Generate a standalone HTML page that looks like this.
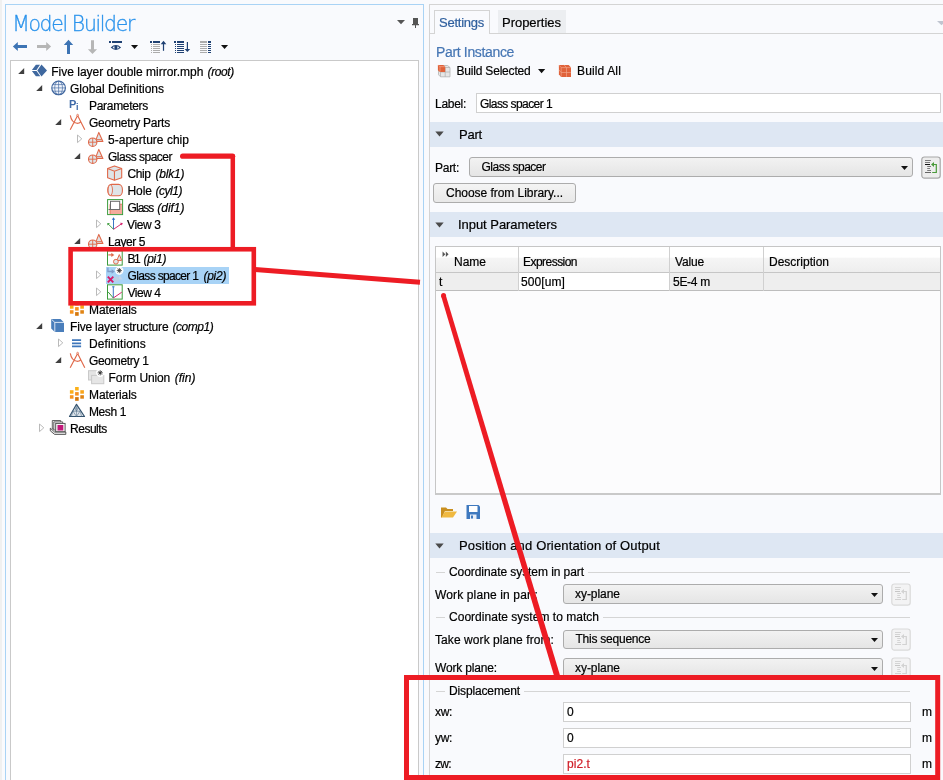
<!DOCTYPE html>
<html><head><meta charset="utf-8"><title>Model Builder</title>
<style>
html,body{margin:0;padding:0}
body{width:943px;height:780px;overflow:hidden;position:relative;background:#f9fafd;font-family:"Liberation Sans",sans-serif;font-size:12px;color:#000}
.ab{position:absolute;display:block}
svg{overflow:visible}
.t{-webkit-text-stroke:0.2px currentColor;margin-top:1px;position:absolute;white-space:nowrap;line-height:16px;height:16px;font-size:12px;transform-origin:0 50%}
.t i{font-style:italic}
.lp{left:5px;top:4px;width:419px;height:790px;background:#f9fafd;border:1px solid #a9d3f5;box-sizing:border-box}
.tree{left:10px;top:60px;width:409px;height:730px;background:#fff;border:1px solid #c9c9c9;box-sizing:border-box}
.rp{left:429px;top:4px;width:530px;height:790px;background:#f9fafd;border:1px solid #d4d4d4;box-sizing:border-box}
.sec{left:430px;width:513px;height:24px;background:#dee7f3}
.dd{box-sizing:border-box;border:1px solid #acacac;border-radius:3px;background:linear-gradient(#f2f2f2,#e5e5e5)}
.inp{box-sizing:border-box;border:1px solid #d0d0d0;background:#fff}
.gl{height:1px;background:#d5d5d5}
#w{position:absolute;left:0;top:0;width:943px;height:780px;will-change:transform}
</style></head><body>
<div id="w">
<!-- left panel -->
<div class="ab" style="left:0;top:0;width:1.500px;height:780px;background:#f0f0f0"></div>
<div class="ab lp"></div>
<span class="t tr" style="letter-spacing:-1.338px;left:12.200px;top:10px;-webkit-text-stroke:0.300px #2a93ec;font-family:'DejaVu Sans','Liberation Sans',sans-serif;font-weight:200;font-size:20.400px;line-height:26px;height:26px;color:#2a93ec">Model Builder</span>
<!-- toolbar icons -->
<svg class="ab" style="left:0;top:0" width="430" height="60" viewBox="0 0 430 60">
<path d="M12.900 46.450L17.800 42V45H27V48H17.800V51Z" fill="#3d74b4"/>
<path d="M51.100 46.450L46.200 42V45H37V48H46.200V51Z" fill="#b6b6b6"/>
<path d="M68.500 39.800L73.200 45H70V54H67V45H63.800Z" fill="#3d74b4"/>
<path d="M92.500 54.100L97.100 49.300H94V40.200H91V49.300H87.900Z" fill="#b6b6b6"/>
<rect x="109" y="41" width="2" height="2" fill="#1f4173"/><rect x="112" y="41" width="10" height="2" fill="#1f4173"/>
<path d="M110.700 47.500Q115.900 42.600 121.100 47.500Q115.900 52.400 110.700 47.500Z" fill="#1f4173"/><path d="M112.600 47.500Q113.600 46.300 114.500 46.300V48.700Q113.600 48.700 112.600 47.500Z M119.200 47.500Q118.200 46.300 117.300 46.300V48.700Q118.200 48.700 119.200 47.500Z" fill="#e9eef6"/>
<path d="M131 45.100H138.100L134.550 49Z" fill="#111"/>
<rect x="150" y="41" width="2" height="2" fill="#1f4173"/><rect x="153" y="41" width="7" height="2" fill="#1f4173"/>
<rect x="151" y="44" width="1" height="1" fill="#acacac"/><rect x="151" y="46" width="1" height="1" fill="#acacac"/><rect x="151" y="48" width="1" height="1" fill="#acacac"/><rect x="151" y="50" width="1" height="1" fill="#acacac"/><rect x="151" y="52" width="1" height="1" fill="#acacac"/><rect x="153" y="44" width="7" height="1" fill="#acacac"/><rect x="153" y="46" width="7" height="1" fill="#acacac"/><rect x="153" y="48" width="7" height="1" fill="#acacac"/><rect x="153" y="50" width="7" height="1" fill="#acacac"/><rect x="153" y="52" width="7" height="1" fill="#acacac"/>
<rect x="162.900" y="42" width="1.200" height="8.800" fill="#1f4173"/><path d="M163.500 40.700L166.300 44.200H160.700Z" fill="#1f4173"/>
<rect x="174" y="41" width="2" height="2" fill="#1f4173"/><rect x="177" y="41" width="7" height="2" fill="#1f4173"/>
<rect x="175" y="44" width="1" height="1" fill="#1f4173"/><rect x="175" y="46" width="1" height="1" fill="#1f4173"/><rect x="175" y="48" width="1" height="1" fill="#1f4173"/><rect x="175" y="50" width="1" height="1" fill="#1f4173"/><rect x="175" y="52" width="1" height="1" fill="#1f4173"/><rect x="177" y="44" width="7" height="1" fill="#1f4173"/><rect x="177" y="46" width="7" height="1" fill="#1f4173"/><rect x="177" y="48" width="7" height="1" fill="#1f4173"/><rect x="177" y="50" width="7" height="1" fill="#1f4173"/><rect x="177" y="52" width="7" height="1" fill="#1f4173"/>
<rect x="186.800" y="42" width="1.200" height="8" fill="#1f4173"/><path d="M187.400 52.100L190.200 48.900H184.600Z" fill="#1f4173"/>
<rect x="200" y="41" width="7" height="2" fill="#acacac"/><rect x="208" y="41" width="3" height="2" fill="#1f4173"/>
<rect x="200" y="44" width="7" height="1" fill="#acacac"/><rect x="200" y="46" width="7" height="1" fill="#acacac"/><rect x="200" y="48" width="7" height="1" fill="#acacac"/><rect x="200" y="50" width="7" height="1" fill="#acacac"/><rect x="200" y="52" width="7" height="1" fill="#acacac"/><rect x="208" y="44" width="3" height="1" fill="#1f4173"/><rect x="208" y="46" width="3" height="1" fill="#1f4173"/><rect x="208" y="48" width="3" height="1" fill="#1f4173"/><rect x="208" y="50" width="3" height="1" fill="#1f4173"/><rect x="208" y="52" width="3" height="1" fill="#1f4173"/>
<path d="M221 45.100H228.100L224.550 49Z" fill="#111"/>
</svg>
<!-- panel menu + pin -->
<svg class="ab" style="left:396px;top:16px" width="26" height="14" viewBox="0 0 26 14">
<path d="M1 4.100H9L5 8.200Z" fill="#555"/>
<path d="M17 2H22V8H17Z M16 8H23V9.300H16Z M19 9.300H20V12H19Z" fill="#555"/>
</svg>
<div class="ab tree"></div>
<div class="ab" style="left:106px;top:267px;width:123px;height:17px;background:#a8d3f6"></div>
<svg class="ab" style="left:0;top:0" width="430" height="450" viewBox="0 0 430 450"><path d="M24.2 68V74H18.2Z" fill="#404040"/><path d="M42.2 85V91H36.2Z" fill="#404040"/><path d="M61.2 119V125H55.2Z" fill="#404040"/><path d="M77.5 135L81.8 138.8L77.5 142.6Z" fill="#fff" stroke="#b2b2b2" stroke-width="0.900" stroke-linejoin="round"/><path d="M80.2 153V159H74.2Z" fill="#404040"/><path d="M96.5 220L100.8 223.8L96.5 227.6Z" fill="#fff" stroke="#b2b2b2" stroke-width="0.900" stroke-linejoin="round"/><path d="M80.2 238V244H74.2Z" fill="#404040"/><path d="M96.5 271L100.8 274.8L96.5 278.6Z" fill="#fff" stroke="#b2b2b2" stroke-width="0.900" stroke-linejoin="round"/><path d="M96.5 288L100.8 291.8L96.5 295.6Z" fill="#fff" stroke="#b2b2b2" stroke-width="0.900" stroke-linejoin="round"/><path d="M42.2 323V329H36.2Z" fill="#404040"/><path d="M58.5 339L62.8 342.8L58.5 346.6Z" fill="#fff" stroke="#b2b2b2" stroke-width="0.900" stroke-linejoin="round"/><path d="M61.2 357V363H55.2Z" fill="#404040"/><path d="M39.5 424L43.8 427.8L39.5 431.6Z" fill="#fff" stroke="#b2b2b2" stroke-width="0.900" stroke-linejoin="round"/></svg>
<svg class="ab" style="left:31px;top:63px" width="16" height="16" viewBox="0 0 16 16"><path d="M0.900 7L4.900 1.800H9L5.500 7Z M0.900 8H5.500L9.300 13.200H4.900Z M6.300 7.500L10.500 1.600L16 7.500L10.500 13.600Z" fill="#3f689f"/></svg>
<span class="t tr" style="letter-spacing:0.005px;left:51.2px;top:63px">Five layer double mirror.mph</span>
<span class="t tr" style="letter-spacing:-0.395px;left:207.6px;top:63px"><i>(root)</i></span>
<svg class="ab" style="left:51px;top:80px" width="16" height="16" viewBox="0 0 16 16"><circle cx="7.600" cy="7.900" r="6.800" fill="#f1f5fb" stroke="#41679f" stroke-width="1.200"/><ellipse cx="7.600" cy="7.900" rx="3.900" ry="6.800" fill="none" stroke="#4a70a6" stroke-width="0.700"/><path d="M1 7.900H14.200M2 4.600H13.200M2 11.200H13.200M7.600 1.200V14.600" stroke="#4a70a6" stroke-width="0.700" fill="none"/></svg>
<span class="t tr" style="letter-spacing:-0.003px;left:70px;top:80px">Global Definitions</span>
<svg class="ab" style="left:69px;top:97px" width="16" height="16" viewBox="0 0 16 16"><text x="0" y="11" font-family='"Liberation Sans",sans-serif' font-weight="bold" font-size="11" fill="#3f6aa8">P</text><text x="7" y="12.800" font-family='"Liberation Sans",sans-serif' font-weight="bold" font-size="9" fill="#3f6aa8">i</text></svg>
<span class="t tr" style="letter-spacing:-0.303px;left:89px;top:97px">Parameters</span>
<svg class="ab" style="left:69px;top:114px" width="16" height="16" viewBox="0 0 16 16"><path d="M8.600 1.400 L1.200 15.700 M8.600 1.400 L15.800 15.700 M1.300 1.300 Q2.500 8.500 8 9.300 Q10.500 9.300 11.800 7.900" stroke="#e0694a" stroke-width="1.150" fill="none"/><circle cx="8.600" cy="1.200" r="0.900" fill="#fff" stroke="#e0694a" stroke-width="0.800"/></svg>
<span class="t tr" style="letter-spacing:-0.217px;left:89px;top:114px">Geometry Parts</span>
<svg class="ab" style="left:88px;top:131px" width="16" height="16" viewBox="0 0 16 16"><path d="M10.800 1.400 L7.300 10.400 H14.900Z" fill="#dfe5e8" stroke="#e0694a" stroke-width="1.100" stroke-linejoin="round"/><path d="M8.200 8.500H14" stroke="#e0694a" stroke-width="0.800"/><circle cx="4.700" cy="11.200" r="4.200" fill="#dfe5e8" stroke="#e0694a" stroke-width="1.100"/><path d="M0.500 11.200H8.900M4.700 7V15.400" stroke="#e0694a" stroke-width="0.900"/></svg>
<span class="t tr" style="letter-spacing:0.019px;left:108px;top:131px">5-aperture chip</span>
<svg class="ab" style="left:88px;top:148px" width="16" height="16" viewBox="0 0 16 16"><path d="M10.800 1.400 L7.300 10.400 H14.900Z" fill="#dfe5e8" stroke="#e0694a" stroke-width="1.100" stroke-linejoin="round"/><path d="M8.200 8.500H14" stroke="#e0694a" stroke-width="0.800"/><circle cx="4.700" cy="11.200" r="4.200" fill="#dfe5e8" stroke="#e0694a" stroke-width="1.100"/><path d="M0.500 11.200H8.900M4.700 7V15.400" stroke="#e0694a" stroke-width="0.900"/></svg>
<span class="t tr" style="letter-spacing:-0.503px;left:108px;top:148px">Glass spacer</span>
<svg class="ab" style="left:107px;top:165px" width="16" height="16" viewBox="0 0 16 16"><path d="M0.600 3.500 L7.450 0.900 L14.700 3.500 V12.700 L7.450 15.300 L0.600 12.700Z" fill="#dfe4e7" stroke="#e0694a" stroke-width="1.100" stroke-linejoin="round"/><path d="M0.600 3.500 L7.450 6.200 L14.700 3.500 M7.450 6.200V15.300" stroke="#e0694a" stroke-width="1.100" fill="none"/></svg>
<span class="t tr" style="letter-spacing:-0.422px;left:127.6px;top:165px">Chip</span>
<span class="t tr" style="letter-spacing:-0.186px;left:155.4px;top:165px"><i>(blk1)</i></span>
<svg class="ab" style="left:107px;top:182px" width="16" height="16" viewBox="0 0 16 16"><rect x="0.800" y="2.400" width="14.600" height="11.400" rx="3.800" ry="4.800" fill="#dfe4e7" stroke="#e0694a" stroke-width="1.100"/><ellipse cx="3.300" cy="8.100" rx="2.200" ry="5.400" fill="#e7ebed" stroke="#e0694a" stroke-width="0.900"/></svg>
<span class="t tr" style="letter-spacing:-0.147px;left:127.6px;top:182px">Hole</span>
<span class="t tr" style="letter-spacing:-0.424px;left:155.4px;top:182px"><i>(cyl1)</i></span>
<svg class="ab" style="left:107px;top:199px" width="16" height="16" viewBox="0 0 16 16"><rect x="0.600" y="0.600" width="15" height="15" fill="#fff" stroke="#3c9b3c" stroke-width="1"/><rect x="3" y="5.200" width="12" height="9.800" fill="#f4ab9d"/><path d="M3 15V5.200H15" stroke="#e0694a" stroke-width="0.800" fill="none"/><rect x="3.500" y="2.300" width="9.200" height="8.200" fill="#fff" stroke="#6b6b6b" stroke-width="1"/><path d="M1.500 10.500H12.700" stroke="#6b6b6b" stroke-width="1"/></svg>
<span class="t tr" style="letter-spacing:-0.977px;left:127.6px;top:199px">Glass</span>
<span class="t tr" style="letter-spacing:-0.024px;left:157.3px;top:199px"><i>(dif1)</i></span>
<svg class="ab" style="left:107px;top:216px" width="16" height="16" viewBox="0 0 16 16"><path d="M6.500 2V13.300" stroke="#2f6fc0" stroke-width="0.950"/><path d="M4.800 3.800L6.500 1.200L8.200 3.800Z" fill="#2f6fc0"/><path d="M6.500 13.300L1 7.800" stroke="#3a9a3a" stroke-width="0.950"/><path d="M0.400 9.600L0.400 7.100L3 7.300Z" fill="#3a9a3a"/><path d="M6.500 13.300L15 7.500" stroke="#d6246e" stroke-width="0.950"/><path d="M13 6.800L15.800 6.900L14.800 9.400Z" fill="#d6246e"/></svg>
<span class="t tr" style="letter-spacing:-0.385px;left:127px;top:216px">View 3</span>
<svg class="ab" style="left:88px;top:233px" width="16" height="16" viewBox="0 0 16 16"><path d="M10.800 1.400 L7.300 10.400 H14.900Z" fill="#dfe5e8" stroke="#e0694a" stroke-width="1.100" stroke-linejoin="round"/><path d="M8.200 8.500H14" stroke="#e0694a" stroke-width="0.800"/><circle cx="4.700" cy="11.200" r="4.200" fill="#dfe5e8" stroke="#e0694a" stroke-width="1.100"/><path d="M0.500 11.200H8.900M4.700 7V15.400" stroke="#e0694a" stroke-width="0.900"/></svg>
<span class="t tr" style="letter-spacing:-0.433px;left:108px;top:233px">Layer 5</span>
<svg class="ab" style="left:107px;top:250px" width="16" height="16" viewBox="0 0 16 16"><rect x="0.500" y="0.800" width="14.700" height="14.300" fill="#fff" stroke="#3c9b3c" stroke-width="1"/><path d="M1.300 4.900H5" stroke="#e0694a" stroke-width="1.200"/><path d="M4.300 2.700L7.300 4.900L4.300 7.100Z" fill="#e0694a"/><path d="M12.300 4.600L9.900 10.400H14.700Z" fill="#dfe5e8" stroke="#e0694a" stroke-width="1" stroke-linejoin="round"/><circle cx="8.900" cy="11.700" r="2.400" fill="#dfe5e8" stroke="#e0694a" stroke-width="1"/></svg>
<span class="t tr" style="letter-spacing:-1.644px;left:127.6px;top:250px">B1</span>
<span class="t tr" style="letter-spacing:-0.223px;left:143.4px;top:250px"><i>(pi1)</i></span>
<svg class="ab" style="left:107px;top:267px" width="16" height="16" viewBox="0 0 16 16"><path d="M0.900 0.600V4.500H5.500" stroke="#7f9cc8" stroke-width="1.300" fill="none"/><path d="M4.600 2.300L7.800 4.500L4.600 6.700Z" fill="#7f9cc8"/><path d="M12.800 8.300L10.500 12.500H15.500Z" fill="#c3d6ea"/><circle cx="9.600" cy="12" r="2.600" fill="#bccfe4"/><path d="M0.800 9.700L6.300 15.300M6.300 9.700L0.800 15.300" stroke="#d6196b" stroke-width="1.900"/><circle cx="12.300" cy="3.600" r="4.200" fill="#fff"/><path d="M12.300 1V6.200M9.700 3.600H14.900M10.450 1.750L14.150 5.450M10.450 5.450L14.150 1.750" stroke="#3a3a3a" stroke-width="0.850"/><circle cx="12.300" cy="3.600" r="1" fill="#3a3a3a"/></svg>
<span class="t tr" style="letter-spacing:-0.66px;left:127.6px;top:267px">Glass spacer 1</span>
<span class="t tr" style="letter-spacing:-0.223px;left:203.4px;top:267px"><i>(pi2)</i></span>
<svg class="ab" style="left:107px;top:284px" width="16" height="16" viewBox="0 0 16 16"><rect x="0.500" y="0.800" width="14.700" height="14.300" fill="#fff" stroke="#3c9b3c" stroke-width="1"/><path d="M6.300 2.800V14" stroke="#2f6fc0" stroke-width="0.950"/><path d="M5.200 2.800H7.500" stroke="#2f6fc0" stroke-width="1"/><path d="M6.300 14L1.200 8" stroke="#3a9a3a" stroke-width="1"/><path d="M6.300 14L14.800 8.200" stroke="#d6246e" stroke-width="1"/></svg>
<span class="t tr" style="letter-spacing:-0.519px;left:127.6px;top:284px">View 4</span>
<svg class="ab" style="left:69px;top:301px" width="16" height="16" viewBox="0 0 16 16"><rect x="0.900" y="4.200" width="3.600" height="3.500" fill="#fbad18"/><rect x="0.900" y="9.200" width="3.600" height="3.500" fill="#f7931e"/><rect x="6.100" y="1" width="3.600" height="3.500" fill="#fbb017"/><rect x="6.100" y="6.100" width="3.600" height="3.500" fill="#f7901e"/><rect x="6.100" y="11.100" width="3.600" height="3.700" fill="#d4780f"/><rect x="11.300" y="4.200" width="3.600" height="3.500" fill="#f9a51a"/><rect x="11.300" y="9.200" width="3.600" height="3.500" fill="#e08414"/></svg>
<span class="t tr" style="letter-spacing:-0.121px;left:89px;top:301px">Materials</span>
<svg class="ab" style="left:51px;top:318px" width="16" height="16" viewBox="0 0 16 16"><path d="M0.200 1 H9.500 L13 4.400 V13.900 H3.800 L0.200 10.500Z" fill="#4a7ebb"/><path d="M0.600 1.400 L3.800 4.400 H13 M3.800 4.400 V13.900" stroke="#eaf1f9" stroke-width="0.900" fill="none"/></svg>
<span class="t tr" style="letter-spacing:-0.182px;left:70px;top:318px">Five layer structure</span>
<span class="t tr" style="letter-spacing:-0.445px;left:172.4px;top:318px"><i>(comp1)</i></span>
<svg class="ab" style="left:69px;top:335px" width="16" height="16" viewBox="0 0 16 16"><path d="M3 5.050H12.100M3 8.350H12.100M3 11.450H12.100" stroke="#3f77bb" stroke-width="1.700"/></svg>
<span class="t tr" style="letter-spacing:0.07px;left:89px;top:335px">Definitions</span>
<svg class="ab" style="left:69px;top:352px" width="16" height="16" viewBox="0 0 16 16"><path d="M8.600 1.400 L1.200 15.700 M8.600 1.400 L15.800 15.700 M1.300 1.300 Q2.500 8.500 8 9.300 Q10.500 9.300 11.800 7.900" stroke="#e0694a" stroke-width="1.150" fill="none"/><circle cx="8.600" cy="1.200" r="0.900" fill="#fff" stroke="#e0694a" stroke-width="0.800"/></svg>
<span class="t tr" style="letter-spacing:-0.32px;left:89px;top:352px">Geometry 1</span>
<svg class="ab" style="left:88px;top:369px" width="16" height="16" viewBox="0 0 16 16"><rect x="0.500" y="1.700" width="12.200" height="9.300" fill="#e4e4e4" stroke="#c9c9c9" stroke-width="1"/><rect x="3.600" y="6.400" width="12.200" height="8.300" fill="#e6e6e6" stroke="#c9c9c9" stroke-width="1"/><circle cx="12.200" cy="3.800" r="4.200" fill="#fff"/><path d="M12.200 1.200V6.400M9.600 3.800H14.800M10.350 1.950L14.050 5.650M10.350 5.650L14.050 1.950" stroke="#3a3a3a" stroke-width="0.850"/><circle cx="12.200" cy="3.800" r="1" fill="#3a3a3a"/></svg>
<span class="t tr" style="letter-spacing:-0.109px;left:108.6px;top:369px">Form Union</span>
<span class="t tr" style="letter-spacing:0.006px;left:174.7px;top:369px"><i>(fin)</i></span>
<svg class="ab" style="left:69px;top:386px" width="16" height="16" viewBox="0 0 16 16"><rect x="0.900" y="4.200" width="3.600" height="3.500" fill="#fbad18"/><rect x="0.900" y="9.200" width="3.600" height="3.500" fill="#f7931e"/><rect x="6.100" y="1" width="3.600" height="3.500" fill="#fbb017"/><rect x="6.100" y="6.100" width="3.600" height="3.500" fill="#f7901e"/><rect x="6.100" y="11.100" width="3.600" height="3.700" fill="#d4780f"/><rect x="11.300" y="4.200" width="3.600" height="3.500" fill="#f9a51a"/><rect x="11.300" y="9.200" width="3.600" height="3.500" fill="#e08414"/></svg>
<span class="t tr" style="letter-spacing:-0.121px;left:89px;top:386px">Materials</span>
<svg class="ab" style="left:69px;top:403px" width="16" height="16" viewBox="0 0 16 16"><path d="M7.500 1.300L15.500 13.500H0.500Z" fill="#dde4ea" stroke="#34536e" stroke-width="1.200" stroke-linejoin="round"/><path d="M4 8.200H11L7.500 13.500Z M5.700 5 H9.300 L7.500 8.200Z M4 8.200 L2.300 13.500 M11 8.200 L12.700 13.500" stroke="#4d6a85" stroke-width="0.550" fill="none"/><path d="M7.500 2.500V13" stroke="#4d6a85" stroke-width="0.500"/></svg>
<span class="t tr" style="letter-spacing:-0.41px;left:89px;top:403px">Mesh 1</span>
<svg class="ab" style="left:50px;top:420px" width="16" height="16" viewBox="0 0 16 16"><path d="M2.300 0.500H10.700V9H2.300Z" fill="#f4f4f4" stroke="#555" stroke-width="0.900"/><path d="M3.800 1.900H12.700V10H3.800Z" fill="#f4f4f4" stroke="#555" stroke-width="0.900"/><path d="M0.300 8.200 L4.600 12 H15.800 V14.400 H4.600 L0.300 10.800Z" fill="#e9e9e9" stroke="#4a4a4a" stroke-width="0.900" stroke-linejoin="round"/><rect x="5.700" y="3.400" width="9.400" height="8.300" fill="#f6f6f6" stroke="#4a4a4a" stroke-width="0.900"/><rect x="7.500" y="5" width="5.800" height="5.500" fill="#c2187a"/></svg>
<span class="t tr" style="letter-spacing:-0.474px;left:70px;top:420px">Results</span>

<!-- right panel -->
<div class="ab rp"></div>
<div class="ab" style="left:430px;top:33px;width:513px;height:1px;background:#d4d4d4"></div>
<div class="ab" style="left:434px;top:10px;width:56px;height:24px;box-sizing:border-box;border:1px solid #d4d4d4;border-bottom:none;background:#f9fafd"></div>
<div class="ab" style="left:498px;top:10px;width:68px;height:23px;background:#eceef1"></div>
<span class="t tr" style="letter-spacing:-0.248px;left:439px;top:14px;font-size:13px;color:#2f5f9e">Settings</span>
<span class="t tr" style="letter-spacing:-0.025px;left:502px;top:14px;font-size:13px">Properties</span>
<svg class="ab" style="left:930px;top:16px" width="13" height="12" viewBox="0 0 13 12"><path d="M7 5H16L11.500 9.300Z" fill="#c0c5d0"/></svg>
<span class="t tr" style="letter-spacing:-0.346px;left:436px;top:42px;font-size:14px;line-height:18px;height:18px;color:#4676b4">Part Instance</span>
<!-- build buttons -->
<svg class="ab" style="left:0;top:0" width="943" height="90" viewBox="0 0 943 90">
<path d="M438.500 65.500H447.500L450 67.500V76.800H440.500L438.500 74.800Z" fill="#e6e6e6" stroke="#b3b3b3" stroke-width="0.800" stroke-linejoin="round"/>
<path d="M440.500 67.500H450M440.500 72H450M445.200 67.500V76.800M440.500 67.500V76.800M438.500 65.500L440.500 67.500" stroke="#b3b3b3" stroke-width="0.800" fill="none"/>
<path d="M437.900 64.900H443.200L445.200 66.600V71.900H439.900L437.900 70.200Z" fill="#e0623a"/>
<path d="M438.300 65.200L440 66.700H445M440 66.700V71.700" stroke="#f3a78c" stroke-width="0.700" fill="none"/>
<path d="M558.900 64.900H568.700L571 67.600V77H561.200L558.900 74.400Z" fill="#e0623a"/>
<path d="M559.300 65.300L561.200 67.600H570.800M561.200 67.600V76.800M566.500 67.600V76.800M561.200 72.500H570.800M564 64.900L566.500 67.600M559 70L561.200 72.500" stroke="#f1a388" stroke-width="0.700" fill="none"/>
</svg>
<span class="t tr" style="letter-spacing:-0.194px;left:456.500px;top:62px">Build Selected</span>
<svg class="ab" style="left:537px;top:68px" width="9" height="6" viewBox="0 0 9 6"><path d="M1 1.100H8.200L4.600 5.200Z" fill="#111"/></svg>
<span class="t tr" style="letter-spacing:0.144px;left:577px;top:62px">Build All</span>
<!-- label -->
<span class="t tr" style="letter-spacing:-0.284px;left:435px;top:95px">Label:</span>
<div class="ab inp" style="left:476px;top:93px;width:465px;height:20px"></div>
<span class="t tr" style="letter-spacing:-0.575px;left:480px;top:95px">Glass spacer 1</span>
<!-- Part section -->
<div class="ab sec" style="top:122.100px;height:24.700px"></div>
<svg class="ab" style="left:435px;top:131.400px" width="10" height="7" viewBox="0 0 10 7"><path d="M0.300 0.500H8.700L4.500 5.600Z" fill="#4a4a4a"/></svg>
<span class="t tr" style="letter-spacing:-0.211px;left:459px;top:126px;font-size:13px">Part</span>
<span class="t tr" style="letter-spacing:-0.269px;left:435px;top:159px">Part:</span>
<div class="ab dd" style="left:469px;top:157px;width:444px;height:20px"></div>
<span class="t tr" style="letter-spacing:-0.503px;left:481.500px;top:158px">Glass spacer</span>
<svg class="ab" style="left:900px;top:165px" width="9" height="6" viewBox="0 0 9 6"><path d="M1 1H8L4.500 5Z" fill="#111"/></svg>
<svg class="ab" style="left:921px;top:156px" width="20" height="23" viewBox="0 0 20 23"><rect x="0.800" y="1" width="18.400" height="21.200" rx="2.600" fill="#ededed" stroke="#a8a8a8" stroke-width="1.200"/><path d="M4 4.500H9.900M4 6.500H9M6.200 10.500H10M6.200 12.500H9M6.200 14.500H10" stroke="#7a7a7a" stroke-width="1"/><path d="M4 8.500H9" stroke="#111" stroke-width="1"/><path d="M4 16.500H10" stroke="#666" stroke-width="1"/><path d="M11.200 16.500H15.300V8.500H12.800" stroke="#4a9a3a" stroke-width="1.200" fill="none"/><path d="M10 8.500L13 6V11Z" fill="#4a9a3a"/></svg>
<div class="ab dd" style="left:433px;top:183px;width:143px;height:20px;background:linear-gradient(#f4f4f4,#e8e8e8)"></div>
<span class="t tr" style="letter-spacing:-0.038px;left:446px;top:184px">Choose from Library...</span>
<!-- Input Parameters -->
<div class="ab sec" style="top:212.400px;height:24.400px"></div>
<svg class="ab" style="left:435px;top:221.700px" width="10" height="7" viewBox="0 0 10 7"><path d="M0.300 0.500H8.700L4.500 5.600Z" fill="#4a4a4a"/></svg>
<span class="t tr" style="letter-spacing:-0.045px;left:458px;top:216px;font-size:13px">Input Parameters</span>
<!-- table -->
<div class="ab" style="left:435px;top:246px;width:506px;height:249px;box-sizing:border-box;border:1px solid #c6c6c6;border-bottom:2px solid #c9c9c9;background:#fcfcfd"></div>
<div class="ab" style="left:436px;top:247px;width:504px;height:25px;background:linear-gradient(#ffffff 0%,#ffffff 40%,#f5f5f5 46%,#eeeeee 100%)"></div>
<div class="ab" style="left:436px;top:272px;width:504px;height:19px;background:#eeeeee;border-top:1px solid #c6c6c6;border-bottom:1px solid #bdbdbd;box-sizing:border-box"></div>
<div class="ab" style="left:519px;top:273px;width:150px;height:17px;background:#fff"></div>
<div class="ab" style="left:518px;top:247px;width:1px;height:44px;background:#d0d0d0"></div>
<div class="ab" style="left:669px;top:247px;width:1px;height:44px;background:#d0d0d0"></div>
<div class="ab" style="left:763.400px;top:247px;width:1px;height:44px;background:#d0d0d0"></div>
<svg class="ab" style="left:441.800px;top:251px" width="7.700" height="6.600" viewBox="0 0 7 6"><path d="M0.500 0.500L3 3L0.500 5.500Z M3.500 0.500L6 3L3.500 5.500Z" fill="#555"/></svg>
<span class="t tr" style="letter-spacing:-0.004px;left:454px;top:253px">Name</span>
<span class="t tr" style="letter-spacing:-0.537px;left:523px;top:253px">Expression</span>
<span class="t tr" style="letter-spacing:-0.163px;left:675px;top:253px">Value</span>
<span class="t tr" style="letter-spacing:-0.003px;left:769px;top:253px">Description</span>
<span class="t" style="left:439px;top:273px">t</span>
<span class="t tr" style="letter-spacing:0.092px;left:521px;top:273px">500[um]</span>
<span class="t tr" style="letter-spacing:-0.281px;left:673px;top:273px">5E-4 m</span>
<!-- open / save icons -->
<svg class="ab" style="left:440px;top:504px" width="42" height="16" viewBox="0 0 42 16"><path d="M1 3.500H6L7.500 5H13V7H5L2 13.500H1Z" fill="#c98f1f"/><path d="M5 7.500H17L13 13.500H1.500Z" fill="#f0b941"/>
<path d="M26.500 1H38.500L40 2.500V15H26.500Z" fill="#3f79bf"/><rect x="29" y="2" width="8.500" height="6" fill="#fff"/><rect x="30" y="10.500" width="6.500" height="4.500" fill="#e8eef7"/><rect x="31" y="11.500" width="2" height="3" fill="#3f79bf"/></svg>
<!-- Position and orientation -->
<div class="ab sec" style="top:533.300px;height:24.400px"></div>
<svg class="ab" style="left:435px;top:542.700px" width="10" height="7" viewBox="0 0 10 7"><path d="M0.300 0.500H8.700L4.500 5.600Z" fill="#4a4a4a"/></svg>
<span class="t tr" style="letter-spacing:0.151px;left:459px;top:537px;font-size:13px">Position and Orientation of Output</span>

<div class="ab gl" style="left:436px;top:572px;width:9px"></div>
<span class="t tr" style="letter-spacing:-0.069px;left:449px;top:563px">Coordinate system in part</span>
<div class="ab gl" style="left:588px;top:572px;width:322px"></div>
<span class="t tr" style="letter-spacing:0.132px;left:435px;top:586px">Work plane in part:</span>
<div class="ab dd" style="left:563px;top:584px;width:320px;height:20px"></div>
<span class="t tr" style="letter-spacing:-0.045px;left:575px;top:585px">xy-plane</span>
<svg class="ab" style="left:870px;top:592px" width="9" height="6" viewBox="0 0 9 6"><path d="M1 1H8L4.500 5Z" fill="#111"/></svg>

<div class="ab gl" style="left:436px;top:617px;width:9px"></div>
<span class="t tr" style="letter-spacing:0.023px;left:449px;top:608px">Coordinate system to match</span>
<div class="ab gl" style="left:603px;top:617px;width:307px"></div>
<span class="t tr" style="letter-spacing:0.077px;left:435px;top:631px">Take work plane from:</span>
<div class="ab dd" style="left:563px;top:630px;width:320px;height:19px"></div>
<span class="t tr" style="letter-spacing:-0.234px;left:575.500px;top:630px">This sequence</span>
<svg class="ab" style="left:870px;top:637px" width="9" height="6" viewBox="0 0 9 6"><path d="M1 1H8L4.500 5Z" fill="#111"/></svg>

<span class="t tr" style="letter-spacing:-0.165px;left:435px;top:659px">Work plane:</span>
<div class="ab dd" style="left:563px;top:658px;width:320px;height:20px"></div>
<span class="t tr" style="letter-spacing:-0.045px;left:575px;top:659px">xy-plane</span>
<svg class="ab" style="left:870px;top:666px" width="9" height="6" viewBox="0 0 9 6"><path d="M1 1H8L4.500 5Z" fill="#111"/></svg>

<!-- disabled side buttons -->
<svg class="ab" style="left:891px;top:583px" width="20" height="23" viewBox="0 0 20 23"><rect x="0.800" y="1" width="18.400" height="21.200" rx="2.600" fill="#f3f3f4" stroke="#dadada" stroke-width="1.200"/><path d="M4 4.500H9.900M4 6.500H9M6.200 10.500H10M6.200 12.500H9M6.200 14.500H10" stroke="#d4d4d4" stroke-width="1"/><path d="M4 8.500H9" stroke="#c6c6c6" stroke-width="1"/><path d="M4 16.500H10" stroke="#d2d2d2" stroke-width="1"/><path d="M11.200 16.500H15.300V8.500H12.800" stroke="#d2d2d2" stroke-width="1.200" fill="none"/><path d="M10 8.500L13 6V11Z" fill="#d2d2d2"/></svg>
<svg class="ab" style="left:891px;top:628px" width="20" height="23" viewBox="0 0 20 23"><rect x="0.800" y="1" width="18.400" height="21.200" rx="2.600" fill="#f3f3f4" stroke="#dadada" stroke-width="1.200"/><path d="M4 4.500H9.900M4 6.500H9M6.200 10.500H10M6.200 12.500H9M6.200 14.500H10" stroke="#d4d4d4" stroke-width="1"/><path d="M4 8.500H9" stroke="#c6c6c6" stroke-width="1"/><path d="M4 16.500H10" stroke="#d2d2d2" stroke-width="1"/><path d="M11.200 16.500H15.300V8.500H12.800" stroke="#d2d2d2" stroke-width="1.200" fill="none"/><path d="M10 8.500L13 6V11Z" fill="#d2d2d2"/></svg>
<svg class="ab" style="left:891px;top:657px" width="20" height="23" viewBox="0 0 20 23"><rect x="0.800" y="1" width="18.400" height="21.200" rx="2.600" fill="#f3f3f4" stroke="#dadada" stroke-width="1.200"/><path d="M4 4.500H9.900M4 6.500H9M6.200 10.500H10M6.200 12.500H9M6.200 14.500H10" stroke="#d4d4d4" stroke-width="1"/><path d="M4 8.500H9" stroke="#c6c6c6" stroke-width="1"/><path d="M4 16.500H10" stroke="#d2d2d2" stroke-width="1"/><path d="M11.200 16.500H15.300V8.500H12.800" stroke="#d2d2d2" stroke-width="1.200" fill="none"/><path d="M10 8.500L13 6V11Z" fill="#d2d2d2"/></svg>

<!-- Displacement -->
<div class="ab gl" style="left:436px;top:691px;width:9px"></div>
<span class="t tr" style="letter-spacing:-0.142px;left:449px;top:682px">Displacement</span>
<div class="ab gl" style="left:524px;top:691px;width:386px"></div>
<span class="t tr" style="letter-spacing:-0.333px;left:435px;top:703px">xw:</span>
<div class="ab inp" style="left:563px;top:702px;width:348px;height:20px"></div>
<span class="t" style="left:567px;top:703px">0</span>
<span class="t" style="left:922px;top:703px">m</span>
<span class="t tr" style="letter-spacing:-0.333px;left:435px;top:729px">yw:</span>
<div class="ab inp" style="left:563px;top:728px;width:348px;height:20px"></div>
<span class="t" style="left:567px;top:729px">0</span>
<span class="t" style="left:922px;top:729px">m</span>
<span class="t tr" style="letter-spacing:-0.667px;left:435px;top:755px">zw:</span>
<div class="ab inp" style="left:563px;top:754px;width:348px;height:20px"></div>
<span class="t tr" style="letter-spacing:0.062px;left:567px;top:755px;color:#d0202a">pi2.t</span>
<span class="t" style="left:922px;top:755px">m</span>

<!-- red annotations -->
<svg class="ab" style="left:0;top:0" width="943" height="780" viewBox="0 0 943 780">
<g stroke="#ed1c24" fill="none" stroke-linecap="butt">
<path d="M182.700 156.200H232.500" stroke-width="5.300" stroke-linecap="round"/>
<path d="M232.800 156.200V248" stroke-width="4.500" stroke-linecap="round"/>
<rect x="70.600" y="249.250" width="183.200" height="54.050" stroke-width="4.600"/>
<path d="M255 269.500L420 282.250" stroke-width="4.800"/>
<path d="M441.100 296L446 296L560.500 677L554.400 677Z" fill="#ed1c24" stroke="none"/><circle cx="443.550" cy="295.600" r="2.500" fill="#ed1c24" stroke="none"/>
<rect x="406.500" y="677.500" width="531.200" height="100" stroke-width="5"/>
</g>
</svg>
</div>
</body></html>
